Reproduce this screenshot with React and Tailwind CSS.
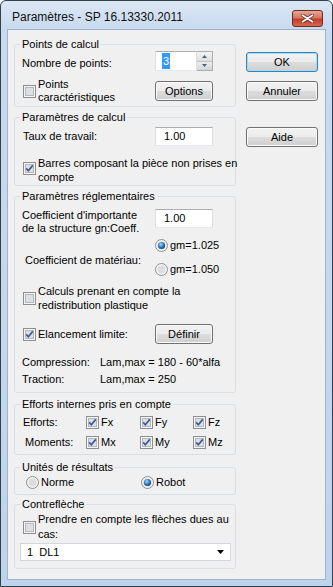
import React from "react";

const Check = ({ checked }) => (
    <svg width="13" height="13" viewBox="0 0 13 13" className="shrink-0">
        <rect x="0.5" y="0.5" width="12" height="12" fill="#f6f6f6" stroke="#8e8f8f" />
        <rect x="2.5" y="2.5" width="8" height="8" fill="#dedfe1" stroke="#b4b8be" />
        {checked && (
            <path d="M3.2 6.4 L5.3 8.8 L9.8 3.4" fill="none" stroke="#3d5a99" strokeWidth="1.7" />
        )}
    </svg>
);

const Radio = ({ checked }) => (
    <svg width="13" height="13" viewBox="0 0 13 13" className="shrink-0">
        <defs>
            <radialGradient id="rdot" cx="0.4" cy="0.35" r="0.7">
                <stop offset="0" stopColor="#a6e0fb" />
                <stop offset="0.55" stopColor="#2f7cc1" />
                <stop offset="1" stopColor="#173f6d" />
            </radialGradient>
        </defs>
        <circle cx="6.5" cy="6.5" r="6" fill="#f4f4f4" stroke="#8e8f8f" />
        <circle cx="6.5" cy="6.5" r="4" fill="#dcdde0" />
        {checked && <circle cx="6.5" cy="6.5" r="3.6" fill="url(#rdot)" />}
    </svg>
);

const Btn = ({ children, def, className = "" }) => (
    <div
        className={`flex items-center justify-center rounded-[3px] border bg-[linear-gradient(#f2f2f2,#ebebeb_50%,#dddddd_50%,#cfcfcf)] ${
            def ? "border-[#3c7fb1] shadow-[inset_0_0_0_1px_#9be1fb]" : "border-[#707070] shadow-[inset_0_0_0_1px_#fbfbfb]"
        } ${className}`}
    >
        {children}
    </div>
);

const Field = ({ value, className = "" }) => (
    <div
        className={`flex items-center bg-white border border-t-[#abadb3] border-x-[#dbdfe6] border-b-[#e3e9ef] pl-[5px] ${className}`}
    >
        {value}
    </div>
);

const Group = ({ title, className = "", children }) => (
    <fieldset className={`min-w-0 rounded-[3px] border border-[#d5dfe5] ${className}`}>
        <legend className="ml-[5px] px-[2px] leading-[13px]">{title}</legend>
        {children}
    </fieldset>
);

export default function App() {
    return (
        <div className="w-[333px] h-[587px] bg-white font-['Liberation_Sans',Arial,sans-serif] text-[11px] text-black">
            <div className="w-[333px] h-[587px] flex flex-col rounded-t-[6px] border border-[#34404e] bg-[linear-gradient(#dce7f4,#c8daef_28px,#bfd4ec)]">
                {/* title bar */}
                <div className="h-[28px] flex items-start justify-between pl-[11px] pr-[9px]">
                    <span className="pt-[9px] text-[12px] leading-[14px] text-[#111]">Paramètres - SP 16.13330.2011</span>
                    <div className="mt-[9px] w-[31px] h-[17px] rounded-[3px] border border-[#6e2a20] bg-[linear-gradient(#e9a897,#d6765f_45%,#c2402b_55%,#d8664e)] flex items-center justify-center">
                        <svg width="13" height="9" viewBox="0 0 13 9">
                            <path d="M1.5 1.2 L11.5 7.8 M11.5 1.2 L1.5 7.8" stroke="#5c2720" strokeWidth="3.4" strokeLinecap="round" />
                            <path d="M1.5 1.2 L11.5 7.8 M11.5 1.2 L1.5 7.8" stroke="#ffffff" strokeWidth="1.9" strokeLinecap="round" />
                        </svg>
                    </div>
                </div>

                {/* content */}
                <div className="flex-1 mx-[6px] mb-[6px] border border-[#9fb3cc] bg-[#f0f0f0] flex pl-[6px] pt-[8px]">
                    <div className="w-[222px] flex flex-col">
                        <Group title="Points de calcul" className="h-[69px]">
                            <div className="flex items-center h-[20px] pl-[7px]">
                                <span className="w-[133px] pt-[5px]">Nombre de points:</span>
                                <div className="flex w-[58px] h-[20px]">
                                    <Field className="w-[42px] h-[20px] pl-[6px]" value={<span className="bg-[#3399ff] text-white px-[1px]">3</span>} />
                                    <div className="w-[16px] flex flex-col border border-[#abadb3] border-l-0">
                                        <div className="flex-1 flex items-center justify-center border-b border-[#c2c4c9] bg-[linear-gradient(#f4f4f4,#dedede)]">
                                            <svg width="5" height="3" viewBox="0 0 5 3"><path d="M0 3 L2.5 0 L5 3 Z" fill="#4d6185" /></svg>
                                        </div>
                                        <div className="flex-1 flex items-center justify-center bg-[linear-gradient(#ececec,#d6d6d6)]">
                                            <svg width="5" height="3" viewBox="0 0 5 3"><path d="M0 0 L2.5 3 L5 0 Z" fill="#4d6185" /></svg>
                                        </div>
                                    </div>
                                </div>
                            </div>
                            <div className="flex items-center mt-[7px] pl-[8px]">
                                <div className="w-[132px] flex items-center">
                                    <Check />
                                    <span className="ml-[2px] leading-[13px]">Points<br />caractéristiques</span>
                                </div>
                                <Btn className="w-[58px] h-[20px]">Options</Btn>
                            </div>
                        </Group>

                        <Group title="Paramètres de calcul" className="h-[75px] mt-[4px]">
                            <div className="flex items-center h-[19px] mt-[3px] pl-[8px]">
                                <span className="w-[132px]">Taux de travail:</span>
                                <Field className="w-[58px] h-[19px] pl-[8px]" value="1.00" />
                            </div>
                            <div className="flex items-center mt-[10px] pl-[8px]">
                                <span className="mb-[3px]"><Check checked /></span>
                                <span className="ml-[2px] leading-[14px] whitespace-nowrap">Barres composant la pièce non prises en<br />compte</span>
                            </div>
                        </Group>

                        <Group title="Paramètres réglementaires" className="h-[203px] mt-[4px]">
                            <div className="flex items-start mt-[6px] pl-[7px]">
                                <span className="w-[133px] leading-[13px] whitespace-nowrap">Coefficient d'importante<br />de la structure gn:Coeff.</span>
                                <Field className="w-[58px] h-[19px] pl-[8px]" value="1.00" />
                            </div>
                            <div className="flex items-start mt-[3px] pl-[10px]">
                                <span className="w-[130px] pt-[15px] leading-[14px]">Coefficient de matériau:</span>
                                <div className="flex flex-col gap-[10px]">
                                    <div className="flex items-center h-[14px]">
                                        <Radio checked />
                                        <span className="ml-[2px]">gm=1.025</span>
                                    </div>
                                    <div className="flex items-center h-[14px]">
                                        <Radio />
                                        <span className="ml-[2px]">gm=1.050</span>
                                    </div>
                                </div>
                            </div>
                            <div className="flex items-center mt-[8px] pl-[8px]">
                                <Check />
                                <span className="ml-[2px] leading-[14px] whitespace-nowrap">Calculs prenant en compte la<br />redistribution plastique</span>
                            </div>
                            <div className="flex items-center h-[20px] mt-[12px] pl-[8px]">
                                <div className="w-[132px] flex items-center">
                                    <Check checked />
                                    <span className="ml-[2px]">Elancement limite:</span>
                                </div>
                                <Btn className="w-[58px] h-[20px]">Définir</Btn>
                            </div>
                            <div className="flex mt-[11px] leading-[14px] pl-[7px]">
                                <span className="w-[78px]">Compression:</span>
                                <span>Lam,max = 180 - 60*alfa</span>
                            </div>
                            <div className="flex mt-[3px] leading-[14px] pl-[7px]">
                                <span className="w-[78px]">Traction:</span>
                                <span>Lam,max = 250</span>
                            </div>
                        </Group>

                        <Group title="Efforts internes pris en compte" className="h-[57px] mt-[5px]">
                            <div className="flex items-center h-[16px] mt-[3px] pl-[8px]">
                                <span className="w-[63px]">Efforts:</span>
                                <div className="w-[54px] flex items-center"><Check checked /><span className="ml-[2px]">Fx</span></div>
                                <div className="w-[53px] flex items-center"><Check checked /><span className="ml-[2px]">Fy</span></div>
                                <div className="flex items-center"><Check checked /><span className="ml-[2px]">Fz</span></div>
                            </div>
                            <div className="flex items-center h-[16px] mt-[4px] pl-[8px]">
                                <span className="w-[63px] pl-[2px]">Moments:</span>
                                <div className="w-[54px] flex items-center"><Check checked /><span className="ml-[2px]">Mx</span></div>
                                <div className="w-[53px] flex items-center"><Check checked /><span className="ml-[2px]">My</span></div>
                                <div className="flex items-center"><Check checked /><span className="ml-[2px]">Mz</span></div>
                            </div>
                        </Group>

                        <Group title="Unités de résultats" className="h-[34px] mt-[6px]">
                            <div className="flex items-center h-[16px] pl-[11px]">
                                <div className="w-[115px] flex items-center"><Radio /><span className="ml-[2px]">Norme</span></div>
                                <div className="flex items-center"><Radio checked /><span className="ml-[2px]">Robot</span></div>
                            </div>
                        </Group>

                        <Group title="Contreflèche" className="h-[71px] mt-[3px]">
                            <div className="flex items-center mt-[1px] pl-[8px]">
                                <Check />
                                <span className="ml-[2px] leading-[15px] whitespace-nowrap">Prendre en compte les flèches dues au<br />cas:</span>
                            </div>
                            <div className="mt-[1px] ml-[5px] w-[211px] h-[18px] flex items-center justify-between bg-white border border-[#d3d6dc] pl-[6px] pr-[6px]">
                                <span>1&nbsp; DL1</span>
                                <svg width="7" height="4" viewBox="0 0 7 4"><path d="M0 0 L7 0 L3.5 4 Z" fill="#000" /></svg>
                            </div>
                        </Group>
                    </div>

                    <div className="ml-[10px] w-[72px] pt-[14px] flex flex-col">
                        <Btn def className="h-[20px]">OK</Btn>
                        <Btn className="h-[20px] mt-[9px]">Annuler</Btn>
                        <Btn className="h-[20px] mt-[26px]">Aide</Btn>
                    </div>
                </div>
            </div>
        </div>
    );
}
